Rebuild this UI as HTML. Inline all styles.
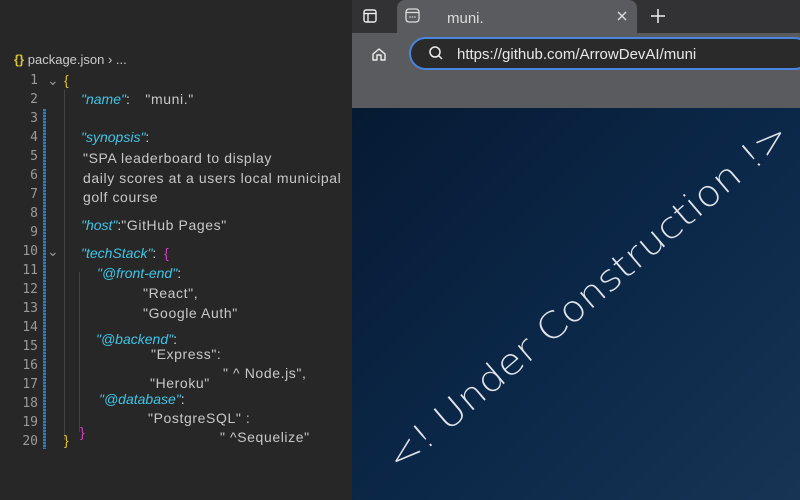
<!DOCTYPE html>
<html><head><meta charset="utf-8"><style>
*{margin:0;padding:0;box-sizing:border-box}
body{width:800px;height:500px;overflow:hidden;background:#262626;font-family:"Liberation Sans","DejaVu Sans",sans-serif;position:relative}
.ed{position:absolute;left:0;top:0;width:352px;height:500px;background:#272727}
.t{position:absolute;white-space:pre;font-size:14px;line-height:16px}
.ln{position:absolute;left:10px;width:28px;text-align:right;color:#9a9a9a;font-size:13px;font-family:"DejaVu Sans Mono",monospace}
.k{color:#3fc5e8;font-style:italic}
.s{color:#c8c8c8;letter-spacing:.6px}
.w{color:#d6d6d6}
.br{position:absolute;left:352px;top:0;width:448px;height:500px}
</style></head><body>
<div class="ed">
<div class="t" style="left:14px;top:52px;font-size:13px"><span style="color:#d8c040;font-weight:bold">{}</span> <span style="color:#ccc">package.json › ...</span></div>
<div style="position:absolute;left:43px;top:109px;width:3px;height:340px;background:repeating-linear-gradient(#2a7fb8 0 2px,#1d4f73 2px 3px)"></div>
<div style="position:absolute;left:64px;top:90px;width:1px;height:350px;background:#444"></div>
<div style="position:absolute;left:79px;top:272px;width:1px;height:160px;background:#444"></div>
<div class="ln" style="top:73px">1</div><div class="ln" style="top:92px">2</div><div class="ln" style="top:111px">3</div><div class="ln" style="top:130px">4</div><div class="ln" style="top:149px">5</div><div class="ln" style="top:168px">6</div><div class="ln" style="top:187px">7</div><div class="ln" style="top:206px">8</div><div class="ln" style="top:225px">9</div><div class="ln" style="top:244px">10</div><div class="ln" style="top:263px">11</div><div class="ln" style="top:282px">12</div><div class="ln" style="top:301px">13</div><div class="ln" style="top:320px">14</div><div class="ln" style="top:339px">15</div><div class="ln" style="top:358px">16</div><div class="ln" style="top:377px">17</div><div class="ln" style="top:396px">18</div><div class="ln" style="top:415px">19</div><div class="ln" style="top:434px">20</div>
<div class="t" style="left:47px;top:72px;color:#999">⌄</div>
<div class="t" style="left:47px;top:243px;color:#999">⌄</div>
<div class="t" style="left:64px;top:72px;color:#e8c020">{</div>
<div class="t" style="left:81px;top:91px"><span class="k">"name"</span><span class="w">:    </span><span class="s">"muni."</span></div>
<div class="t" style="left:81px;top:129px"><span class="k">"synopsis"</span><span class="w">:</span></div>
<div class="t s" style="left:83px;top:150px">"SPA leaderboard to display</div>
<div class="t s" style="left:83px;top:170px">daily scores at a users local municipal</div>
<div class="t s" style="left:83px;top:189px">golf course</div>
<div class="t" style="left:81px;top:217px"><span class="k">"host"</span><span class="w">:</span><span class="s">"GitHub Pages"</span></div>
<div class="t" style="left:81px;top:245px"><span class="k">"techStack"</span><span class="w">:  </span><span style="color:#d040c0">{</span></div>
<div class="t" style="left:97px;top:265px"><span class="k">"@front-end"</span><span class="w">:</span></div>
<div class="t s" style="left:143px;top:285px">"React",</div>
<div class="t s" style="left:143px;top:305px">"Google Auth"</div>
<div class="t" style="left:96px;top:331px"><span class="k">"@backend"</span><span class="w">:</span></div>
<div class="t s" style="left:151px;top:346px">"Express":</div>
<div class="t s" style="left:223px;top:365px">" ^ Node.js",</div>
<div class="t s" style="left:150px;top:375px">"Heroku"</div>
<div class="t" style="left:99px;top:391px"><span class="k">"@database"</span><span class="w">:</span></div>
<div class="t s" style="left:148px;top:410px">"PostgreSQL" :</div>
<div class="t s" style="left:220px;top:429px">" ^Sequelize"</div>
<div class="t" style="left:80px;top:424px;color:#d040c0">}</div>
<div class="t" style="left:64px;top:432px;color:#e8c020">}</div>
</div>
<div class="br">
<div style="position:absolute;left:0;top:0;width:448px;height:33px;background:#323234"></div>
<div style="position:absolute;left:45px;top:0;width:240px;height:33px;background:#5a5b5e;border-radius:8px 8px 0 0"></div>
<div style="position:absolute;left:0;top:33px;width:448px;height:75px;background:#5a5b5e"></div>
<svg style="position:absolute;left:0;top:0" width="448" height="108">
<rect x="12" y="10" width="12" height="12" rx="2" fill="none" stroke="#eee" stroke-width="1.4"/><line x1="12" y1="13.5" x2="24" y2="13.5" stroke="#eee" stroke-width="1.4"/><line x1="16" y1="13.5" x2="16" y2="22" stroke="#eee" stroke-width="1.4"/>
<rect x="54" y="9" width="13" height="13" rx="3" fill="none" stroke="#ddd" stroke-width="1.3"/><line x1="54" y1="12.5" x2="67" y2="12.5" stroke="#ddd" stroke-width="1.3"/><circle cx="58" cy="17" r=".8" fill="#ddd"/><circle cx="60.5" cy="17" r=".8" fill="#ddd"/><circle cx="63" cy="17" r=".8" fill="#ddd"/>
<path d="M266 12l8 8M274 12l-8 8" stroke="#ddd" stroke-width="1.4"/>
<path d="M306 9v14M299 16h14" stroke="#eee" stroke-width="1.5"/>
<path d="M21 60v-6l6-5 6 5v6h-4v-5h-4v5z" fill="none" stroke="#eee" stroke-width="1.4" stroke-linejoin="round"/>
<rect x="58" y="38" width="400" height="31" rx="15.5" fill="#2a2a2b" stroke="#4a86e0" stroke-width="2"/>
<circle cx="83" cy="52" r="5" fill="none" stroke="#eee" stroke-width="1.5"/><line x1="86.5" y1="55.5" x2="90" y2="59" stroke="#eee" stroke-width="1.5"/>
</svg>
<div class="t" style="left:95px;top:11px;color:#ddd;font-size:15px">muni.</div>
<div class="t" style="left:105px;top:47px;color:#e8e8e8;font-size:15px">https://github.com/ArrowDevAI/muni</div>
<div style="position:absolute;left:0;top:108px;width:448px;height:392px;background:linear-gradient(135deg,#061a33 0%,#0b2748 50%,#183455 100%)"></div>
<svg style="position:absolute;left:0;top:108px" width="448" height="392">
<text x="0" y="0" transform="translate(237,190) rotate(-40.5)" text-anchor="middle" dominant-baseline="middle" font-family="DejaVu Sans, sans-serif" font-weight="200" font-size="36" fill="#dfe4ea" textLength="515" lengthAdjust="spacingAndGlyphs">&lt;! Under Construction !&gt;</text>
</svg>
</div>
</body></html>
